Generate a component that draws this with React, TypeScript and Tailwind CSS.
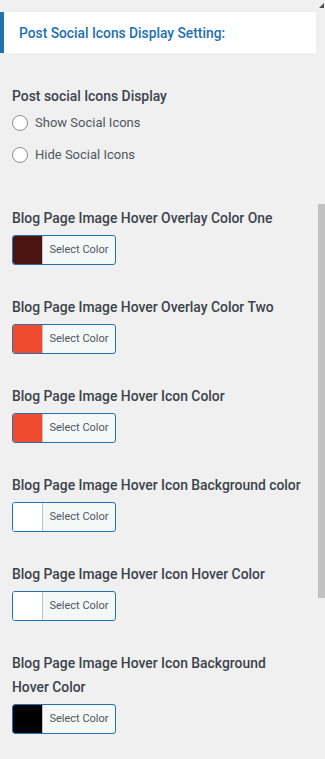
import React from "react";

interface ColorSetting {
  label: string;
  color: string;
}

const colorSettings: ColorSetting[] = [
  { label: "Blog Page Image Hover Overlay Color One", color: "#4a1511" },
  { label: "Blog Page Image Hover Overlay Color Two", color: "#f04a2f" },
  { label: "Blog Page Image Hover Icon Color", color: "#f04a2f" },
  { label: "Blog Page Image Hover Icon Background color", color: "#ffffff" },
  { label: "Blog Page Image Hover Icon Hover Color", color: "#ffffff" },
  { label: "Blog Page Image Hover Icon Background Hover Color", color: "#000000" },
];

const ColorButton: React.FC<{ color: string }> = ({ color }) => (
  <button className="flex h-[30px] w-[104px] overflow-hidden rounded-[3px] border border-[#2271b1] bg-[#f6f7f7] p-0">
    <span className="h-full w-[30px] border-r border-[#c3c4c7]" style={{ backgroundColor: color }} />
    <span className="flex-1 text-center text-[11px] leading-[28px] text-[#50575e]">Select Color</span>
  </button>
);

const App: React.FC = () => {
  return (
    <div className="relative h-[759px] w-[325px] overflow-hidden bg-[#f0f0f1] font-['Roboto',sans-serif]">
      <div className="absolute right-[1px] top-[3px] h-0 w-0 border-b-[5px] border-l-[5px] border-b-[#505050] border-l-transparent" />
      <div className="absolute right-0 top-[204px] h-[394px] w-[7px] bg-[#c1c1c1]" />

      <div className="pt-[12px]">
        <div className="mr-[9px] flex h-[41px] items-center border-l-4 border-[#2271b1] bg-white pl-[15px]">
          <h3 className="pt-[2px] text-[13.8px] font-medium text-[#2271b1]">Post Social Icons Display Setting:</h3>
        </div>
      </div>

      <div className="pl-[12px]">
        <div className="mt-[31px] text-[13.9px] font-medium leading-[24px] text-[#3c434a]">Post social Icons Display</div>
        <label className="mt-[4px] flex h-[22px] items-center gap-[7px] text-[13px] text-[#50575e]">
          <span className="h-[16px] w-[16px] rounded-full border border-[#8c8f94] bg-white" />
          Show Social Icons
        </label>
        <label className="mt-[10px] flex h-[22px] items-center gap-[7px] text-[13px] text-[#50575e]">
          <span className="h-[16px] w-[16px] rounded-full border border-[#8c8f94] bg-white" />
          Hide Social Icons
        </label>

        <div className="mt-[40px] flex flex-col gap-[30px]">
          {colorSettings.map((s, i) => (
            <div key={i}>
              <div className="w-[291px] text-[13.9px] font-medium leading-[24px] text-[#3c434a]">{s.label}</div>
              <div className="mt-[5px]">
                <ColorButton color={s.color} />
              </div>
            </div>
          ))}
        </div>
      </div>
    </div>
  );
};

export default App;
